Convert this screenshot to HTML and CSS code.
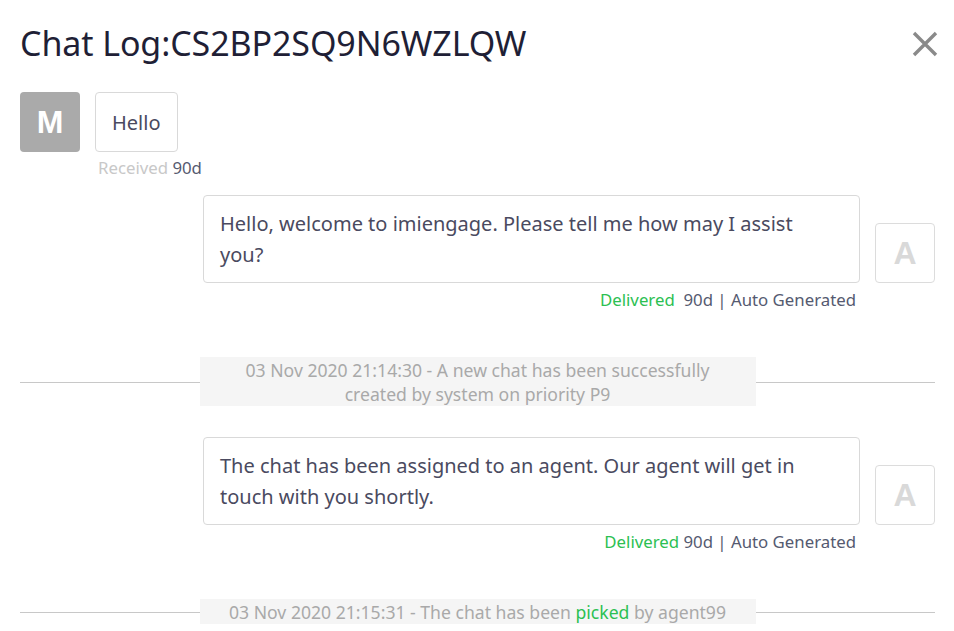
FILE: index.html
```html
<!DOCTYPE html>
<html>
<head>
<meta charset="utf-8">
<link rel="stylesheet" href="styles.css">
</head>
<body>
<div class="page">
  <header class="head">
    <h1 class="title">Chat Log:CS2BP2SQ9N6WZLQW</h1>
    <button class="close" aria-label="Close">
      <svg width="26" height="26" viewBox="0 0 26 26"><path d="M2 2 L24 24 M24 2 L2 24" stroke="#8a8a8a" stroke-width="3.4" fill="none"/></svg>
    </button>
  </header>

  <div class="msg in">
    <div class="row">
      <div class="avatar user">M</div>
      <div class="bubble small">Hello</div>
    </div>
    <div class="meta left"><span class="muted">Received</span> 90d</div>
  </div>

  <div class="msg out first">
    <div class="row">
      <div class="bubble">Hello, welcome to imiengage. Please tell me how may I assist you?</div>
      <div class="avatar bot">A</div>
    </div>
    <div class="meta right"><span class="green">Delivered</span>&nbsp; 90d | Auto Generated</div>
  </div>

  <div class="sys two">
    <div class="sys-text">03 Nov 2020 21:14:30 - A new chat has been successfully created by system on priority P9</div>
  </div>

  <div class="msg out second">
    <div class="row">
      <div class="bubble">The chat has been assigned to an agent. Our agent will get in touch with you shortly.</div>
      <div class="avatar bot">A</div>
    </div>
    <div class="meta right"><span class="green">Delivered</span> 90d | Auto Generated</div>
  </div>

  <div class="sys one">
    <div class="sys-text">03 Nov 2020 21:15:31 - The chat has been <span class="green">picked</span> by agent99</div>
  </div>
</div>
</body>
</html>
```

FILE: styles.css
```css
* { box-sizing: border-box; }
html, body { margin: 0; padding: 0; background: #fff; }
body {
  font-family: "Noto Sans", "Liberation Sans", sans-serif;
  color: #4a4a60;
  overflow: hidden;
  height: 631px;
}
.page { padding: 0 19px 0 20px; }

.head {
  display: flex;
  justify-content: space-between;
  align-items: center;
  height: 92px;
  padding-bottom: 6px;
}
.title {
  margin: 0;
  font-size: 34px;
  font-weight: 400;
  color: #1f1f36;
  letter-spacing: -0.1px;
}
.close {
  border: 0;
  background: none;
  padding: 0;
  margin-right: -3px;
  margin-top: 2px;
  width: 26px;
  height: 26px;
  display: flex;
}

.row { display: flex; align-items: flex-end; }
.avatar {
  width: 60px;
  height: 60px;
  flex: 0 0 60px;
  border-radius: 4px;
  display: flex;
  align-items: center;
  justify-content: center;
  font-family: "Liberation Sans", sans-serif;
  font-weight: 700;
  font-size: 32px;
}
.avatar.user { background: #aaaaaa; color: #fff; }
.avatar.bot { border: 1px solid #dcdcdc; color: #d9d9d9; }

.bubble {
  border: 1px solid #d9d9d9;
  border-radius: 4px;
  font-size: 20px;
  line-height: 31px;
  padding: 12px 60px 12px 16px;
  color: #4a4a60;
}
.bubble.small {
  margin-left: 15px;
  height: 60px;
  padding: 0 16px;
  display: flex;
  align-items: center;
}
.msg.out .row { justify-content: flex-end; }
.msg.out .bubble { width: 657px; margin-right: 15px; }

.meta {
  font-size: 16.8px;
  line-height: 20px;
  color: #555a70;
}
.meta.left { margin-left: 78px; margin-top: 6px; }
.meta.right { text-align: right; margin-right: 79px; margin-top: 7px; }
.muted { color: #c8c8c8; }
.green { color: #2cc052; }

.msg.first { margin-top: 17px; }
.msg.second { margin-top: 31px; }

.sys {
  position: relative;
  display: flex;
  justify-content: center;
}
.sys::before {
  content: "";
  position: absolute;
  left: 0;
  right: 0;
  top: 50%;
  border-top: 1px solid #c8c8c8;
}
.sys-text {
  position: relative;
  width: 556px;
  background: #f5f5f5;
  color: #a9a9a9;
  font-size: 17.6px;
  line-height: 24px;
  text-align: center;
  padding: 0.5px 18px;
}
.sys.two { margin-top: 47px; }
.sys.one { margin-top: 47px; }
```
